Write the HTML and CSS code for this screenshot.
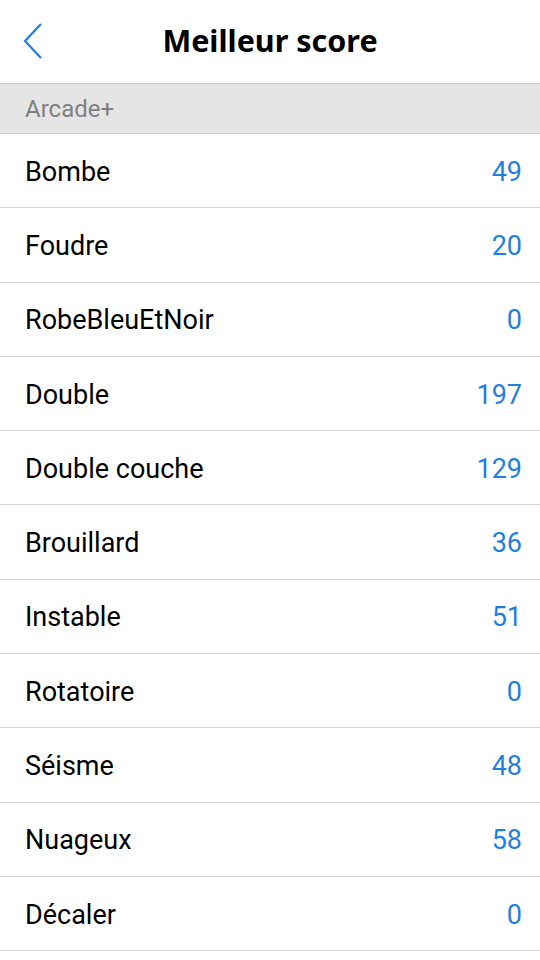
FILE: index.html
```html
<!DOCTYPE html>
<html>
	<head>
		<meta charset="UTF-8">
		<title>Meilleur score</title>
		<link rel="stylesheet" href="styles.css">
	</head>
	<body>
		<div id="header">
			<span class="back">
				<svg width="24" height="40" viewBox="0 0 24 40"><polyline points="20,3 4,20 20,37" fill="none" stroke="#1f7fe3" stroke-width="2.2"/></svg>
			</span>
			<h1>Meilleur score</h1>
		</div>
		<div class="section">Arcade+</div>
		<ul id="list">
			<li><span>Bombe</span><span class="score">49</span></li>
			<li><span>Foudre</span><span class="score">20</span></li>
			<li><span>RobeBleuEtNoir</span><span class="score">0</span></li>
			<li><span>Double</span><span class="score">197</span></li>
			<li><span>Double couche</span><span class="score">129</span></li>
			<li><span>Brouillard</span><span class="score">36</span></li>
			<li><span>Instable</span><span class="score">51</span></li>
			<li><span>Rotatoire</span><span class="score">0</span></li>
			<li><span>Séisme</span><span class="score">48</span></li>
			<li><span>Nuageux</span><span class="score">58</span></li>
			<li><span>Décaler</span><span class="score">0</span></li>
		</ul>
	</body>
</html>
```
FILE: styles.css
```css
*{
	margin: 0;
	padding: 0;
	list-style: none;
	box-sizing: border-box;
}
body{
	width: 540px;
	background: #fff;
	font-family: Roboto, "Noto Sans", sans-serif;
}
#header{
	height: 84px;
	border-bottom: 1px solid #cfcfcf;
	display: flex;
	align-items: center;
	justify-content: center;
	position: relative;
}
#header h1{
	font-family: "Noto Sans", sans-serif;
	font-weight: bold;
	font-size: 30.5px;
	color: #000;
	margin-top: -4px;
}
.back{
	position: absolute;
	left: 21px;
	top: 21px;
	display: flex;
}
.section{
	height: 50px;
	background: #e5e5e5;
	border-bottom: 1px solid #d0d0d0;
	color: #7f7f7f;
	font-size: 24px;
	padding: 0 25px;
	display: flex;
	align-items: center;
}
#list li{
	height: 74.3px;
	border-bottom: 1px solid #d8d8d8;
	display: flex;
	align-items: center;
	justify-content: space-between;
	padding: 2px 18px 0 25px;
	font-size: 27px;
	color: #000;
}
#list .score{
	color: #1f7fe3;
}
```
